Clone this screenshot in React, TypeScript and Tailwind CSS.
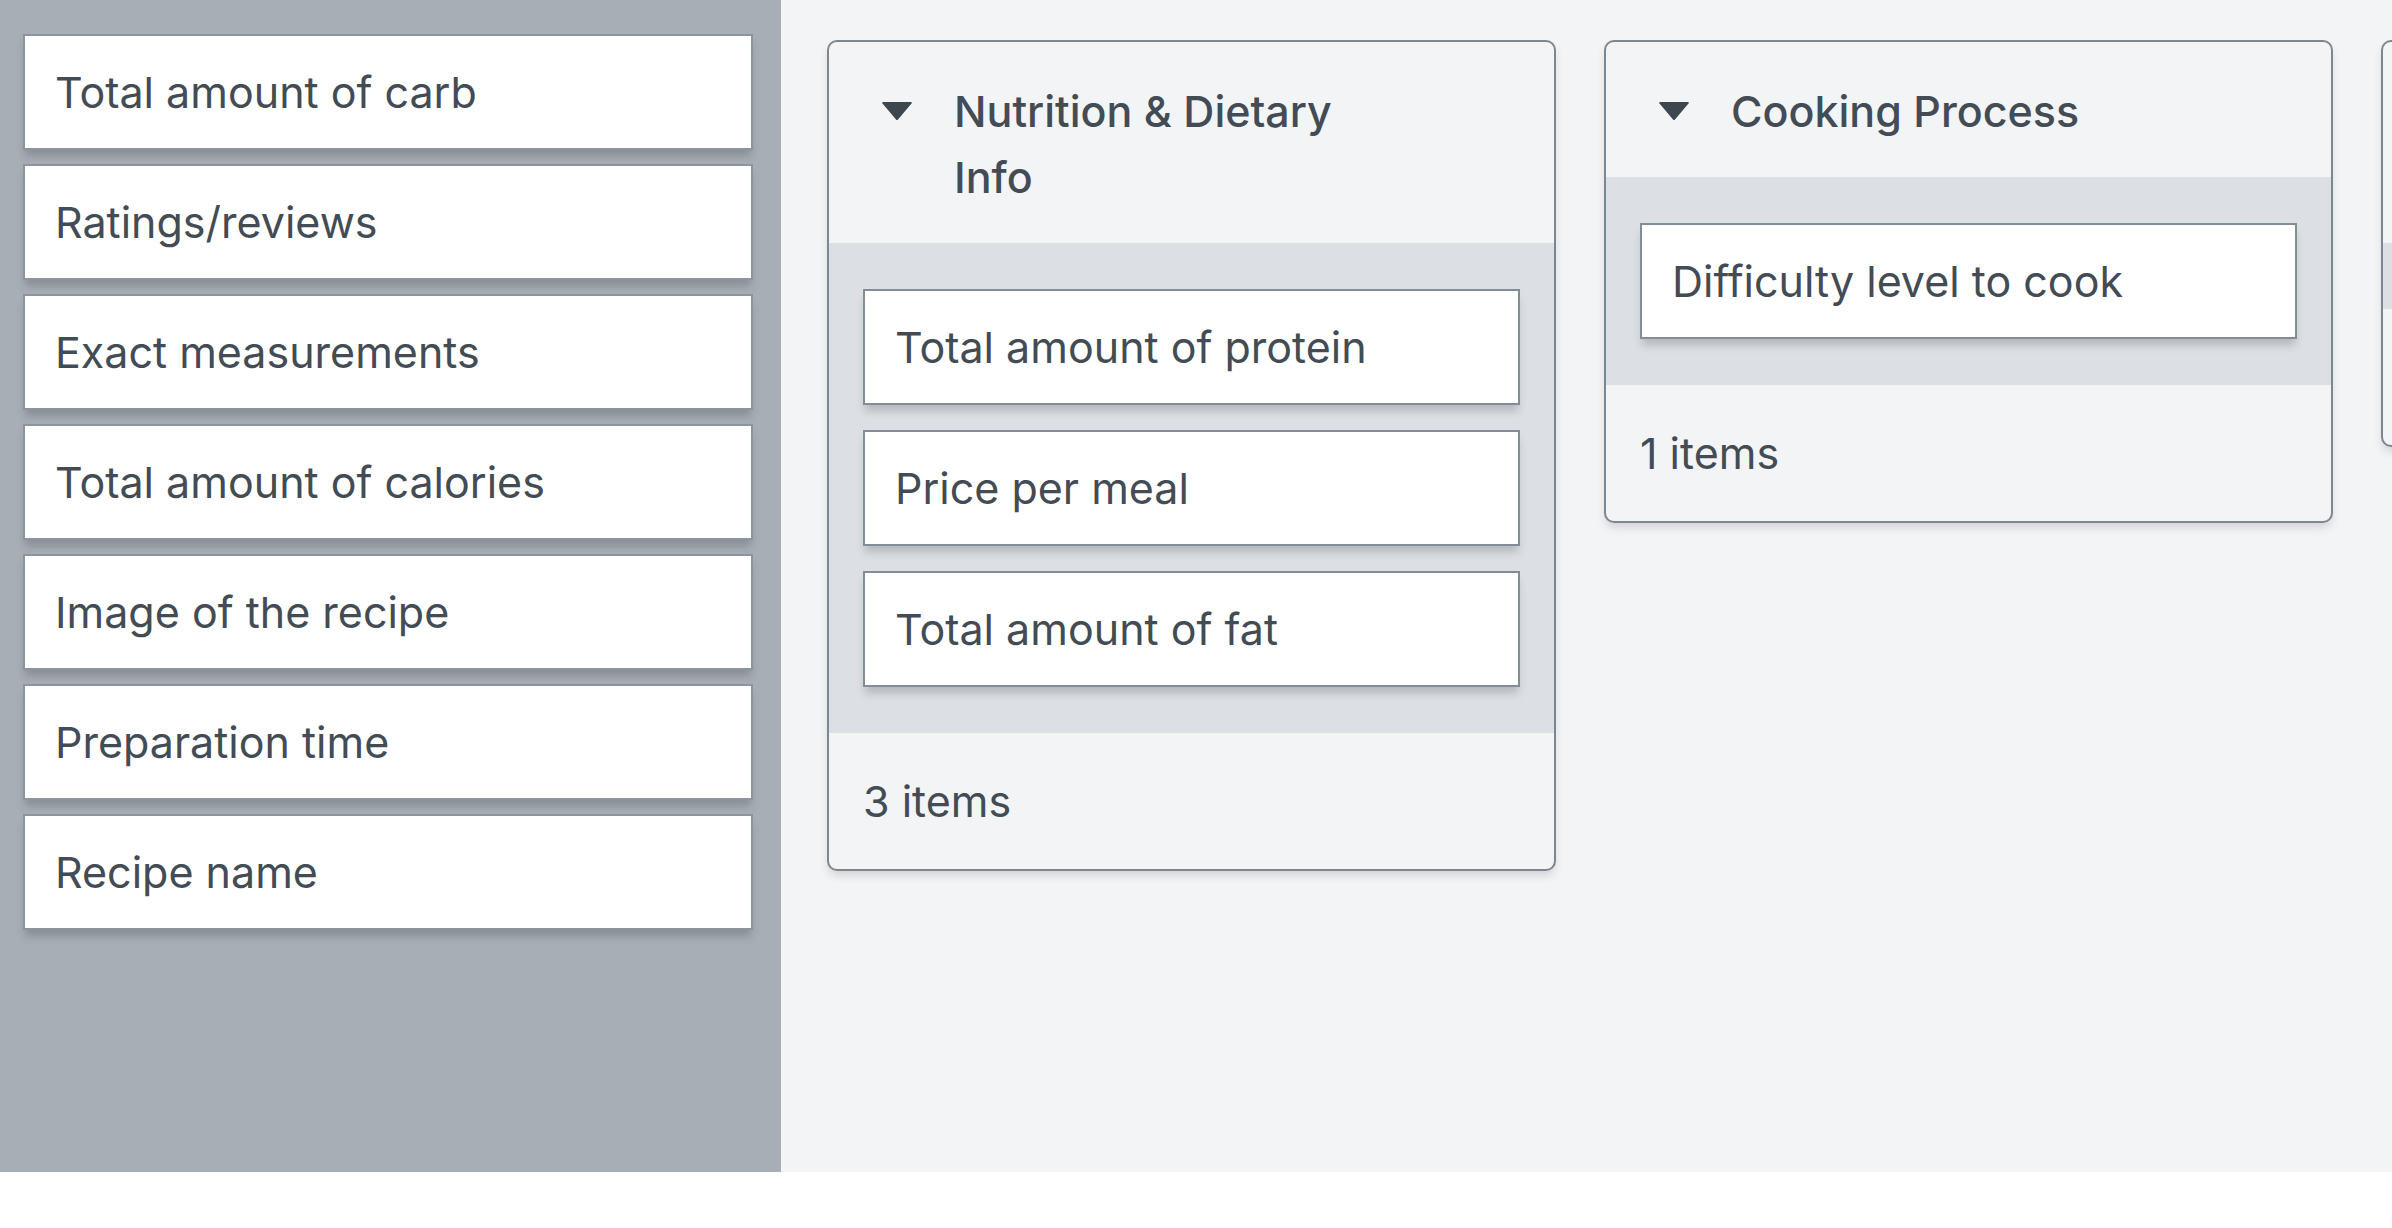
import React from "react";

const font = { fontFamily: "Inter, 'Open Sans', sans-serif" };

function Card({ label }: { label: string }) {
  return (
    <div className="flex h-[116px] items-center border-2 border-[#838d96] bg-white pl-[30px] text-[43px] text-[#434c54] shadow-[0_8px_8px_-2px_rgba(60,70,80,0.25)]">
      {label}
    </div>
  );
}

function Triangle() {
  return (
    <svg width="32" height="20" viewBox="0 0 32 20" className="mt-[23px] shrink-0">
      <path d="M2 1 L30 1 Q31.5 1 30.5 2.5 L17 18.5 Q16 19.5 15 18.5 L1.5 2.5 Q0.5 1 2 1 Z" fill="#3f474e" />
    </svg>
  );
}

function Column({ title, items }: { title: string; items: string[] }) {
  return (
    <div className="flex w-[729px] shrink-0 flex-col self-start overflow-hidden rounded-[10px] border-2 border-[#7d8790] bg-[#f3f4f6] shadow-[0_6px_10px_-2px_rgba(60,70,80,0.2)]">
      <div className="flex items-start gap-[41px] pl-[52px] pt-[36px] pb-[33px]">
        <Triangle />
        <div className="max-w-[420px] text-[43px] font-medium leading-[66px] text-[#434c54]">{title}</div>
      </div>
      {items.length > 0 ? (
        <div className="flex flex-col gap-[25px] bg-[#dcdfe3] px-[34px] py-[46px]">
          {items.map((i) => (
            <Card key={i} label={i} />
          ))}
        </div>
      ) : (
        <div className="h-[66px] bg-[#dcdfe3]" />
      )}
      <div className="flex h-[136px] items-center pl-[34px] text-[43px] text-[#434c54]">{items.length} items</div>
    </div>
  );
}

export default function App() {
  const left = [
    "Total amount of carb",
    "Ratings/reviews",
    "Exact measurements",
    "Total amount of calories",
    "Image of the recipe",
    "Preparation time",
    "Recipe name",
  ];
  return (
    <div className="flex h-[1172px] w-[2392px] overflow-hidden bg-white" style={font}>
      <div className="flex w-[781px] shrink-0 flex-col gap-[14px] bg-[#a8aeb5] pl-[23px] pr-[28px] pt-[34px]">
        {left.map((l) => (
          <div key={l} className="flex h-[116px] items-center border-2 border-[#8c959d] bg-white pl-[30px] text-[43px] text-[#434c54] shadow-[0_8px_8px_-2px_rgba(60,70,80,0.3)]">
            {l}
          </div>
        ))}
      </div>
      <div className="flex flex-1 gap-[48px] overflow-hidden bg-[#f3f4f6] pl-[46px] pt-[40px]">
        <Column title="Nutrition & Dietary Info" items={["Total amount of protein", "Price per meal", "Total amount of fat"]} />
        <Column title="Cooking Process" items={["Difficulty level to cook"]} />
        <Column title="Equipment & Kitchen Tools" items={[]} />
      </div>
    </div>
  );
}
